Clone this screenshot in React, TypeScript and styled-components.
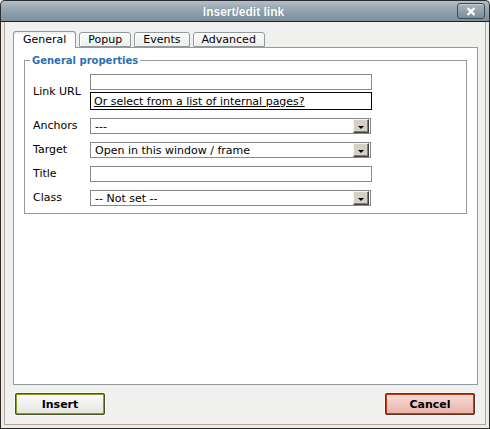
import React from "react";
import styled, { createGlobalStyle } from "styled-components";

const Global = createGlobalStyle`
  html, body { margin: 0; padding: 0; background: #f0f0ee; }
  body { font-family: "DejaVu Sans", Verdana, sans-serif; font-size: 11px; color: #000; }
  * { box-sizing: border-box; }
`;

const Window = styled.div`
  width: 490px;
  height: 429px;
  display: flex;
  flex-direction: column;
  background: #f0f0ee;
`;

const TitleBar = styled.div`
  height: 22px;
  flex: none;
  display: flex;
  align-items: center;
  justify-content: center;
  position: relative;
  border: 1px solid #2b2f33;
  border-bottom-color: #1e1e1e;
  border-radius: 5px 5px 0 0;
  background: linear-gradient(#b4bec7 0%, #95a4b0 45%, #7d8e9b 100%);
`;

const Title = styled.span`
  font-family: "Liberation Sans", Arial, sans-serif;
  font-weight: bold;
  font-size: 12px;
  color: #fff;
  text-shadow: 0 0 1px #5d6c78;
  margin-left: -3px;
  margin-top: 1px;
`;

const CloseButton = styled.div`
  position: absolute;
  right: 4px;
  top: 2px;
  width: 28px;
  height: 16px;
  border: 1px solid #3e4a54;
  border-radius: 3px;
  background: linear-gradient(#aab5be, #7b8c99);
  box-shadow: inset 0 1px 0 #c5ced5;
  display: flex;
  align-items: center;
  justify-content: center;
`;

const Frame = styled.div`
  flex: 1;
  display: flex;
  border: 1px solid #2a2a2a;
  border-top: none;
  padding: 0 3px 3px;
  background: #ecebe7;
`;

const Inner = styled.div`
  flex: 1;
  display: flex;
  flex-direction: column;
  border: 1px solid #b3a594;
  border-top: none;
  background: #f0f0ee;
  padding: 9px 7px 9px 8px;
`;

const TabRow = styled.div`
  display: flex;
  align-items: flex-end;
  height: 16px;
  position: relative;
  z-index: 1;
`;

const Tab = styled.div<{ $active?: boolean }>`
  height: ${(p) => (p.$active ? "17px" : "15px")};
  margin-bottom: ${(p) => (p.$active ? "-1px" : "0")};
  margin-right: 3px;
  padding: ${(p) => (p.$active ? "0 9px 1px 9px" : "0 8px")};
  border: 1px solid #919b9c;
  border-bottom: ${(p) => (p.$active ? "none" : "1px solid #919b9c")};
  border-radius: 3px 3px 0 0;
  background: ${(p) => (p.$active ? "#fff" : "linear-gradient(#fbfbfa, #eeeeea)")};
  box-shadow: ${(p) => (p.$active ? "inset 0 2px 0 #f0f0ee" : "inset 1px 1px 0 #fff")};
  display: flex;
  align-items: center;
  white-space: nowrap;
`;

const Panel = styled.div`
  flex: 1;
  background: #fff;
  border: 1px solid #919b9c;
  padding: 6px 10px 0 10px;
`;

const FieldSet = styled.fieldset`
  margin: 0;
  padding: 7px 0 7px 8px;
  border: 1px solid #919b9c;
  min-width: 0;
`;

const Legend = styled.legend`
  font-weight: bold;
  font-size: 10px;
  color: #2b6fb6;
  padding: 0 2px;
  margin-left: -3px;
  line-height: 13px;
`;

const Form = styled.div`
  display: grid;
  grid-template-columns: 57px 282px;
  row-gap: 8px;
  align-items: center;
`;

const Label = styled.div`
  line-height: 16px;
  white-space: nowrap;
`;

const Stack = styled.div`
  display: flex;
  flex-direction: column;
  gap: 2px;
`;

const TextInput = styled.div`
  height: 16px;
  width: 282px;
  border: 1px solid #8a8a8a;
  background: #fff;
`;

const LinkBox = styled.div`
  height: 18px;
  width: 282px;
  border: 1px solid #000;
  background: #fff;
  padding-left: 3px;
  display: flex;
  align-items: center;
  a {
    color: #000;
    text-decoration: underline;
  }
`;

const Select = styled.div`
  height: 16px;
  width: 281px;
  border: 1px solid #8a8a8a;
  background: #fff;
  display: flex;
  align-items: center;
  padding: 0 1px 0 4px;
`;

const SelectText = styled.span`
  flex: 1;
  white-space: nowrap;
  overflow: hidden;
`;

const DropButton = styled.div`
  width: 16px;
  height: 14px;
  background: #d4d0c8;
  border-style: solid;
  border-width: 1px;
  border-color: #f4f3ee #404040 #404040 #f4f3ee;
  box-shadow: inset -1px -1px 0 #808080;
  display: flex;
  align-items: center;
  justify-content: center;
  padding-top: 2px;
`;

const Arrow = styled.span`
  width: 0;
  height: 0;
  border-left: 3px solid transparent;
  border-right: 3px solid transparent;
  border-top: 3px solid #000;
`;

const Footer = styled.div`
  display: flex;
  justify-content: space-between;
  margin-top: 8px;
  padding: 0 3px 0 2px;
`;

const Button = styled.div<{ $kind: "ok" | "cancel" }>`
  width: 90px;
  height: 22px;
  border: 2px solid ${(p) => (p.$kind === "ok" ? "#8c9d2c" : "#c73a17")};
  outline: 1px solid ${(p) => (p.$kind === "ok" ? "#4a521e" : "#6e2a14")};
  outline-offset: -1px;
  border-radius: 2px;
  background: ${(p) =>
    p.$kind === "ok"
      ? "linear-gradient(#fbfbf8, #eeeeea 60%, #e4e4df)"
      : "linear-gradient(#f7dcd6, #efc3ba 60%, #e8b5ab)"};
  box-shadow: 0 0 0 1px #fafaf8;
  display: flex;
  align-items: center;
  justify-content: center;
  font-weight: bold;
  font-size: 11px;
  color: #000;
`;

function Dropdown({ value }: { value: string }) {
  return (
    <Select>
      <SelectText>{value}</SelectText>
      <DropButton>
        <Arrow />
      </DropButton>
    </Select>
  );
}

export default function App() {
  return (
    <>
      <Global />
      <Window>
        <TitleBar>
          <Title>Insert/edit link</Title>
          <CloseButton>
            <svg width="10" height="9" viewBox="0 0 10 9">
              <path d="M1.5 1 L8.5 8 M8.5 1 L1.5 8" stroke="#fff" strokeWidth="2.4" />
            </svg>
          </CloseButton>
        </TitleBar>
        <Frame>
          <Inner>
            <TabRow>
              <Tab $active>General</Tab>
              <Tab>Popup</Tab>
              <Tab>Events</Tab>
              <Tab>Advanced</Tab>
            </TabRow>
            <Panel>
              <FieldSet>
                <Legend>General properties</Legend>
                <Form>
                  <Label>Link URL</Label>
                  <Stack>
                    <TextInput />
                    <LinkBox>
                      <a href="#">Or select from a list of internal pages?</a>
                    </LinkBox>
                  </Stack>
                  <Label>Anchors</Label>
                  <Dropdown value="---" />
                  <Label>Target</Label>
                  <Dropdown value="Open in this window / frame" />
                  <Label>Title</Label>
                  <TextInput />
                  <Label>Class</Label>
                  <Dropdown value="-- Not set --" />
                </Form>
              </FieldSet>
            </Panel>
            <Footer>
              <Button $kind="ok">Insert</Button>
              <Button $kind="cancel">Cancel</Button>
            </Footer>
          </Inner>
        </Frame>
      </Window>
    </>
  );
}
